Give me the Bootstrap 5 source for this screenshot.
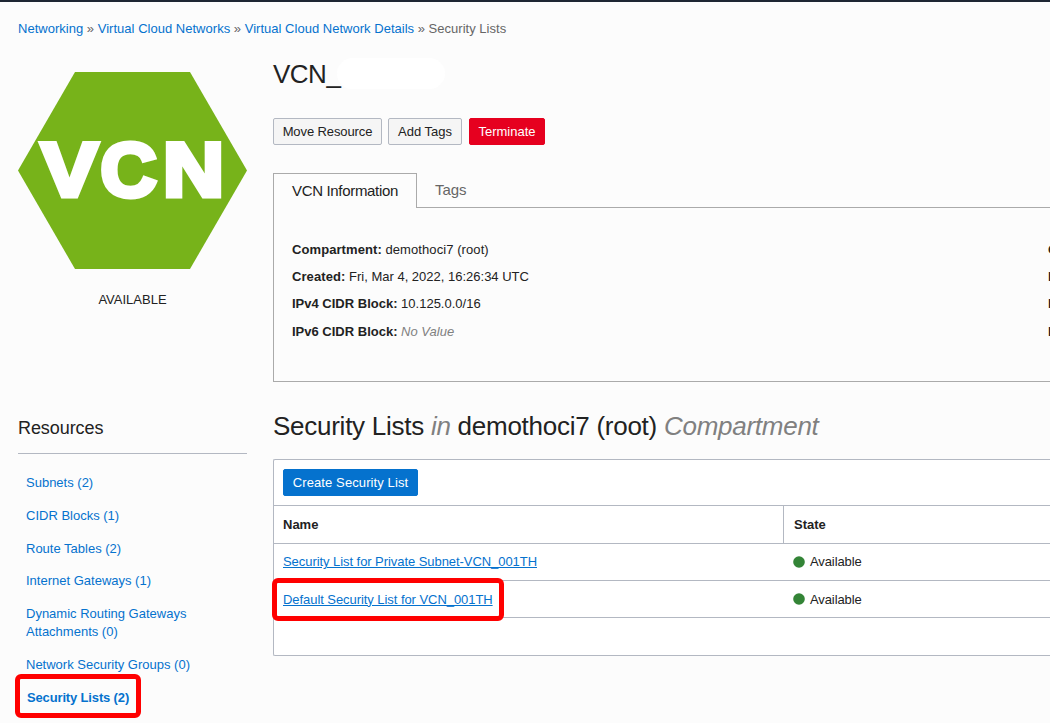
<!DOCTYPE html>
<html lang="en">
<head>
<meta charset="utf-8">
<meta name="viewport" content="width=device-width, initial-scale=1">
<title>Security Lists</title>
<link href="https://cdn.jsdelivr.net/npm/bootstrap@5.3.0/dist/css/bootstrap.min.css" rel="stylesheet">
<style>
  body { font-family: "Liberation Sans", Arial, sans-serif; font-size: 13px; line-height: 18px; color: #222; background: #fcfcfc; height: 723px; border-top: 2px solid #1e2633; }
  a { color: #0572ce; text-decoration: none; }
  .crumbs { padding: 18px 18px 0; height: 56px; letter-spacing: .02px; white-space: pre; color: #666; }
  .layout { gap: 26px; padding-left: 18px; }
  .side { width: 229px; }
  .main-col { width: 777px; }
  .hexagon { margin-top: 14px; width: 229px; height: 197px; }
  .hexagon text { font: bold 75.5px "Liberation Sans", Arial, sans-serif; fill: #fff; stroke: #fff; stroke-width: 5px; text-anchor: middle; }
  .status { margin-top: 22px; }
  .side-title { font-size: 18px; line-height: 24px; margin-top: 107px; padding-bottom: 13px; border-bottom: 1px solid #b3b8c2; letter-spacing: -.08px; }
  .res-nav { margin-top: 20px; padding-left: 8px; gap: 14.8px; }
  .marked { outline: 5px solid #f00; border-radius: 1px; }
  .res-nav .marked { margin: -10px 0 0 -6px; width: 116px; height: 34px; padding: 10px 0 0 7px; letter-spacing: -.15px; }
  .main-title { font-size: 26px; line-height: 32px; height: 60px; margin: 0; letter-spacing: -.5px; }
  .blank { width: 108px; height: 31px; background: #fff; border-radius: 16px; margin-left: -3px; }
  .btn { --bs-btn-font-size: 13px; --bs-btn-line-height: 18px; --bs-btn-border-radius: 2px; --bs-btn-padding-x: 0; --bs-btn-padding-y: 0; height: 27px; line-height: 25px; }
  .btn-plain { background: #f5f5f5; border-color: #b3b8c2; color: #222; }
  .btn-danger { --bs-btn-bg: #e6001f; --bs-btn-border-color: #e6001f; }
  .btn-primary { --bs-btn-bg: #0572ce; --bs-btn-border-color: #0572ce; letter-spacing: .1px; }
  .b-move { width: 109px; letter-spacing: -.1px; }
  .b-tags { width: 74px; margin-left: 6px; }
  .b-term { width: 76px; margin-left: 7px; }
  .b-create { width: 135px; }
  .tabs { height: 35px; margin-top: 28px; font-size: 15px; line-height: 34px; letter-spacing: -.33px; }
  .tab-on { width: 144px; border: 1px solid #aaa; border-bottom: 0; padding-left: 18px; }
  .tab-off { border-bottom: 1px solid #aaa; padding-left: 18px; color: #666; line-height: 33px; letter-spacing: -.1px; }
  .info { height: 174px; border-left: 1px solid #aaa; border-bottom: 1px solid #aaa; padding: 33px 0 0 18px; }
  .info dl { width: 756px; line-height: 18px; }
  .info dl > div { margin-bottom: 9.2px; white-space: nowrap; }
  .info dt, .info dd { display: inline; margin: 0; }
  .muted { color: #808080; }
  .ls-a { letter-spacing: .08px; }
  h2.list-title { font-size: 26px; line-height: 32px; margin: 28px 0 17px; font-weight: 400; white-space: nowrap; letter-spacing: -.26px; }
  .panel { background: #fff; border: 1px solid #b3b8c2; border-right: 0; border-radius: 2px 0 0 2px; height: 197px; }
  .tools { height: 45px; padding: 9px 9px 0; }
  .t-row { height: 37px; border-top: 1px solid #b3b8c2; }
  .t-row.head { height: 38px; }
  .c-name { width: 509px; padding-left: 9px; }
  .c-state { border-left: 1px solid transparent; padding-left: 10px; letter-spacing: -.1px; }
  .head .c-state { border-color: #b3b8c2; letter-spacing: 0; }
  .t-row a { text-decoration: underline; letter-spacing: -.06px; }
  .t-row .marked { margin-left: -6px; width: 222px; height: 33px; padding: 8px 0 0 6px; position: relative; }
  .dot { width: 12px; height: 12px; margin: 0 5px 0 -1px; }
  .low { padding-top: 1px; }
</style>
</head>
<body class="overflow-hidden">
<nav class="crumbs"><a href="#">Networking</a> » <a href="#">Virtual Cloud Networks</a> » <a href="#">Virtual Cloud Network Details</a> » Security Lists</nav>
<div class="layout d-flex">
  <aside class="side flex-shrink-0">
    <svg class="hexagon d-block" viewBox="0 0 229 197"><path fill="#77b31a" d="M57 0H172L229 98.500 172 197H57L0 98.500Z"/><text transform="translate(51.500 123.500) scale(1.13 1)">V</text><text transform="translate(110.500 123.500) scale(1.03 1)">C</text><text transform="translate(175.500 123.500) scale(1.12 1)">N</text></svg>
    <div class="status text-center">AVAILABLE</div>
    <h3 class="side-title mb-0 fw-normal">Resources</h3>
    <nav class="res-nav d-flex flex-column">
      <a href="#">Subnets (2)</a>
      <a href="#">CIDR Blocks (1)</a>
      <a href="#">Route Tables (2)</a>
      <a href="#">Internet Gateways (1)</a>
      <a href="#">Dynamic Routing Gateways<br>Attachments (0)</a>
      <a href="#">Network Security Groups (0)</a>
      <a href="#" class="fw-bold marked">Security Lists (2)</a>
    </nav>
  </aside>
  <main class="main-col flex-shrink-0">
    <h1 class="main-title d-flex fw-normal"><span>VCN_</span><span class="blank"></span></h1>
    <div class="d-flex">
      <button class="btn btn-plain b-move">Move Resource</button>
      <button class="btn btn-plain b-tags">Add Tags</button>
      <button class="btn btn-danger b-term">Terminate</button>
    </div>
    <div class="tabs d-flex"><div class="tab-on">VCN Information</div><div class="tab-off flex-grow-1">Tags</div></div>
    <section class="info d-flex overflow-hidden">
      <dl class="flex-shrink-0 mb-0">
        <div class="ls-a"><dt>Compartment:</dt> <dd>demothoci7 (root)</dd></div>
        <div><dt class="ls-a">Created:</dt> <dd>Fri, Mar 4, 2022, 16:26:34 UTC</dd></div>
        <div><dt>IPv4 CIDR Block:</dt> <dd>10.125.0.0/16</dd></div>
        <div><dt>IPv6 CIDR Block:</dt> <dd class="muted fst-italic">No Value</dd></div>
      </dl>
      <dl class="flex-shrink-0 mb-0">
        <div><dt>O</dt></div><div><dt>D</dt></div><div><dt>D</dt></div><div><dt>D</dt></div>
      </dl>
    </section>
    <h2 class="list-title">Security Lists <i class="muted">in</i> demothoci7 (root) <i class="muted">Compartment</i></h2>
    <section class="panel">
      <div class="tools"><button class="btn btn-primary b-create d-block">Create Security List</button></div>
      <div class="t-row head d-flex align-items-stretch fw-bold"><div class="c-name d-flex align-items-center">Name</div><div class="c-state d-flex align-items-center">State</div></div>
      <div class="t-row d-flex align-items-center"><div class="c-name"><a href="#">Security List for Private Subnet-VCN_001TH</a></div><div class="c-state d-flex align-items-center"><svg class="dot" viewBox="0 0 12 12"><circle cx="6" cy="6" r="5.800" fill="#338436"/></svg>Available</div></div>
      <div class="t-row d-flex align-items-center"><div class="c-name"><div class="marked"><a href="#">Default Security List for VCN_001TH</a></div></div><div class="c-state d-flex align-items-center"><svg class="dot" viewBox="0 0 12 12"><circle cx="6" cy="6" r="5.800" fill="#338436"/></svg><span class="low">Available</span></div></div>
      <div class="t-row"></div>
    </section>
  </main>
</div>
<script src="https://cdn.jsdelivr.net/npm/bootstrap@5.3.0/dist/js/bootstrap.bundle.min.js"></script>
</body>
</html>
